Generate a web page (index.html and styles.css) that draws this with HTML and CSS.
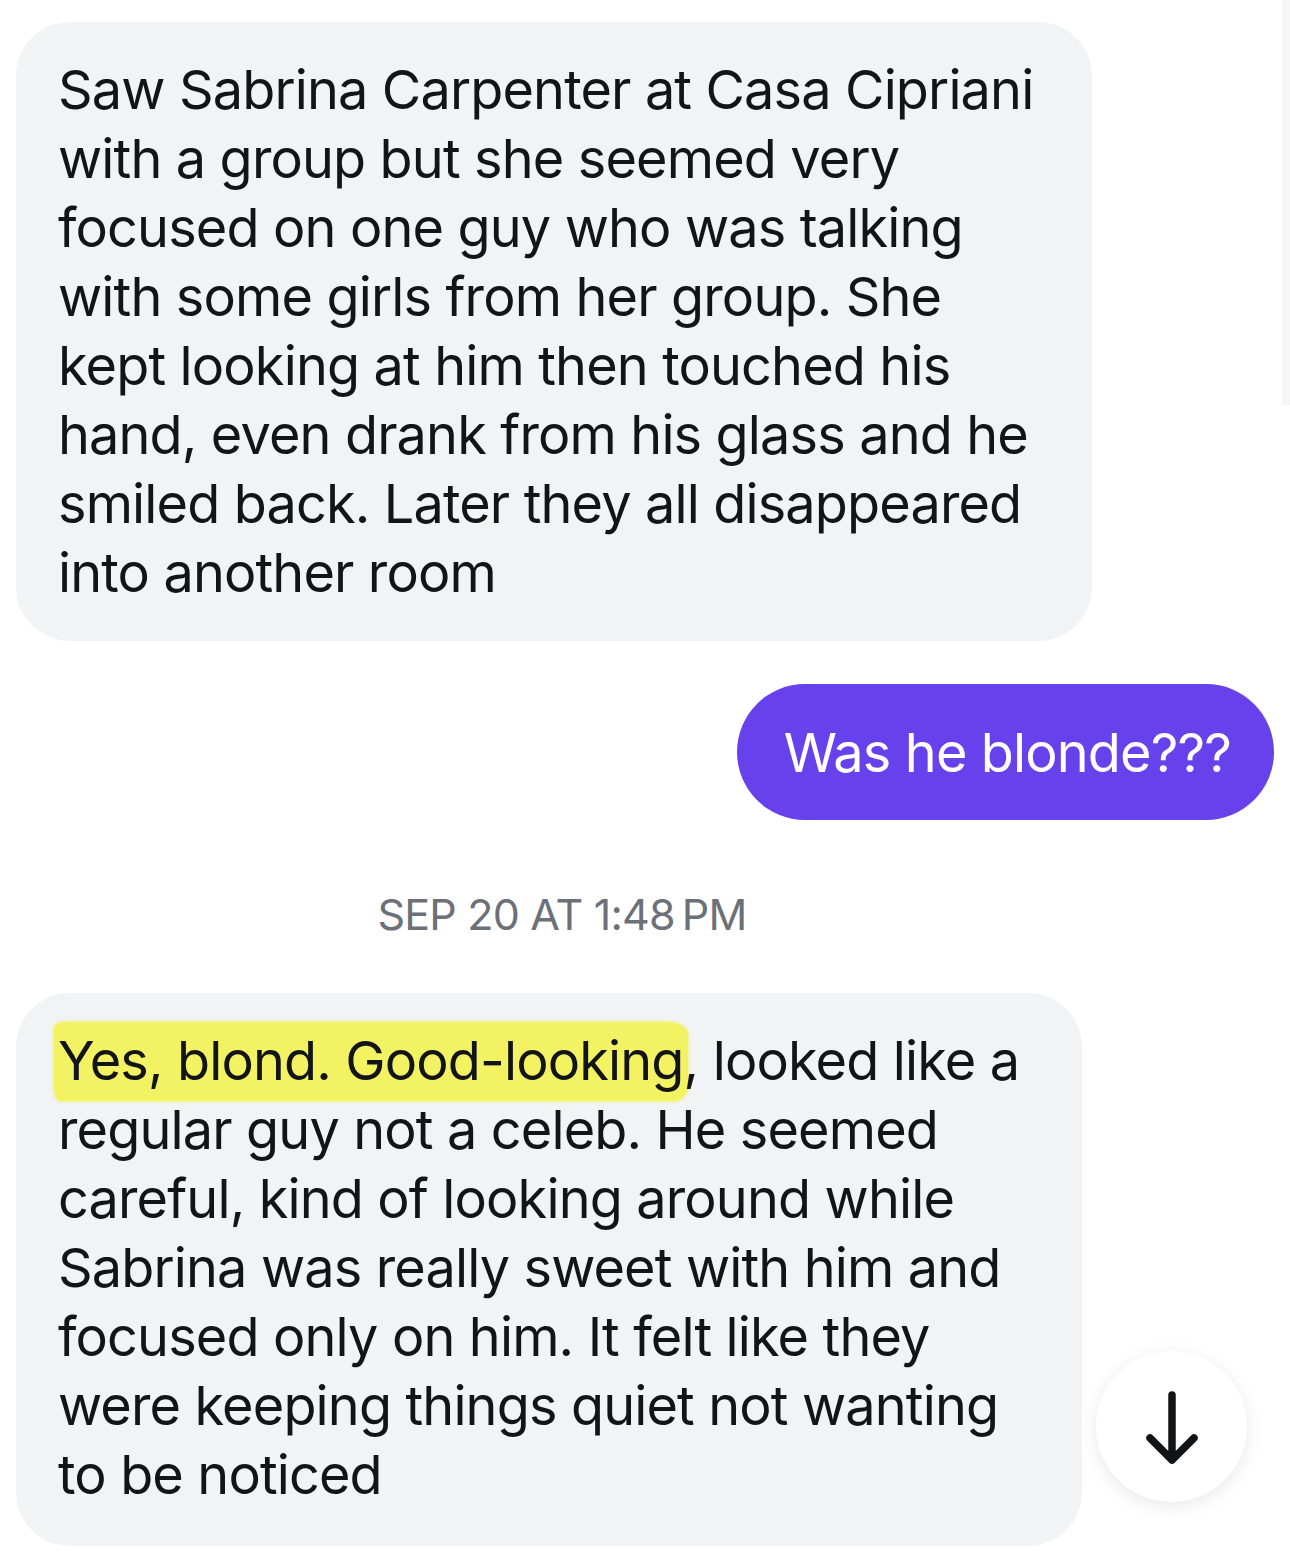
FILE: index.html
```html
<!DOCTYPE html>
<html>
<head>
<meta charset="utf-8">
<link rel="stylesheet" href="styles.css">
</head>
<body>
<div class="thread">
  <div class="row incoming">
    <div class="bubble in b1">Saw Sabrina Carpenter at Casa Cipriani<br>with a group but she seemed very<br>focused on one guy who was talking<br>with some girls from her group. She<br>kept looking at him then touched his<br>hand, even drank from his glass and he<br>smiled back. Later they all disappeared<br>into another room</div>
  </div>
  <div class="row outgoing">
    <div class="bubble out">Was he blonde???</div>
  </div>
  <div class="stamp">SEP 20 AT 1:48&#8201;PM</div>
  <div class="row incoming">
    <div class="bubble in b3"><span class="hl">Yes, blond. Good-looking</span>, looked like a<br>regular guy not a celeb. He seemed<br>careful, kind of looking around while<br>Sabrina was really sweet with him and<br>focused only on him. It felt like they<br>were keeping things quiet not wanting<br>to be noticed</div>
  </div>
</div>
<div class="scrollbar"></div>
<button class="jump" aria-label="Scroll to bottom">
  <svg viewBox="0 0 80 80" width="80" height="80"><path d="M40 8v65M18 51l22 22 22-22" fill="none" stroke="#111317" stroke-width="7.5" stroke-linecap="round" stroke-linejoin="round"/></svg>
</button>
</body>
</html>
```
FILE: styles.css
```css
html, body {
  margin: 0;
  padding: 0;
  background: #fff;
}
body {
  font-family: Inter, "Noto Sans", sans-serif;
  color: #131418;
  width: 1290px;
  height: 1557px;
  overflow: hidden;
  position: relative;
}
.thread {
  display: flex;
  flex-direction: column;
  padding: 22px 16px 0 16px;
}
.row {
  display: flex;
}
.outgoing {
  justify-content: flex-end;
  margin-top: 43px;
}
.bubble {
  font-size: 54px;
  line-height: 69px;
  letter-spacing: -0.85px;
  white-space: nowrap;
}
.in {
  background: #f2f3f5;
  border-radius: 54px;
  box-sizing: border-box;
  padding: 33px 40px 34px 42px;
}
.b1 {
  width: 1076px;
}
.b3 {
  width: 1066px;
  padding-bottom: 37px;
}
.out {
  background: #6741ec;
  color: #fff;
  border-radius: 68px;
  height: 136px;
  box-sizing: border-box;
  display: flex;
  align-items: center;
  padding: 0 43px 0 47px;
}
.stamp {
  text-align: center;
  font-size: 43px;
  line-height: 52px;
  color: #6c7078;
  margin-top: 68px;
  padding-right: 166px;
  letter-spacing: -0.8px;
}
.stamp + .row {
  margin-top: 53px;
}
.hl {
  background: #f2f263;
  border-radius: 10px 22px 14px 6px / 6px 12px 16px 14px;
  padding: 6px 4px 8px 4px;
  margin-left: -4px;
  margin-right: -4px;
  box-shadow: 0 0 3px 1px rgba(242, 242, 99, 0.7);
}
.scrollbar {
  position: absolute;
  right: 0;
  top: 0;
  width: 8px;
  height: 405px;
  background: #f6f6f6;
}
.jump {
  position: absolute;
  left: 1096px;
  top: 1351px;
  width: 151px;
  height: 151px;
  border-radius: 50%;
  border: none;
  background: #fff;
  box-shadow: 0 4px 18px rgba(0, 0, 0, 0.09);
  display: flex;
  align-items: center;
  justify-content: center;
  padding: 0;
}
```
